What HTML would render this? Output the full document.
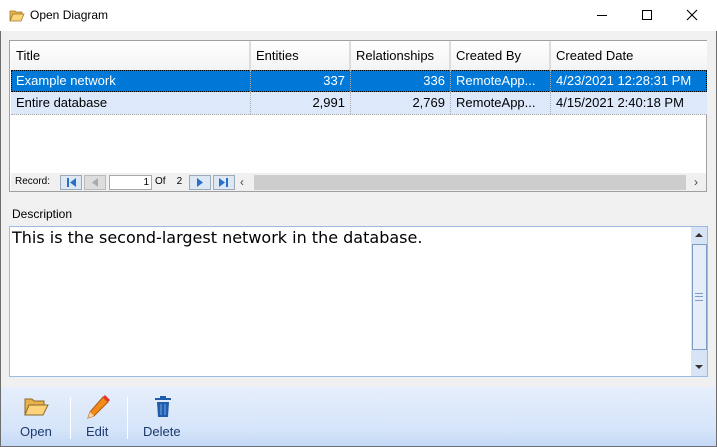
<!DOCTYPE html>
<html><head><style>
body{margin:0;width:717px;height:447px;overflow:hidden;font-family:"Liberation Sans",sans-serif;font-size:13px;background:#f0f0f0;position:relative}
.abs{position:absolute}
.win{position:absolute;left:0;top:0;width:715px;height:445px;border:1px solid #6e6e6e;border-top:1px solid #aaa;}
.title{position:absolute;left:0;top:0;width:717px;height:31px;background:#fff}
.cell{position:absolute;height:22px;line-height:22px;padding:0 5px;box-sizing:border-box;white-space:nowrap;overflow:hidden;border-right:1px dotted #aaa}
.hd{position:absolute;top:41px;height:29px;line-height:30px;padding-left:5px;box-sizing:border-box;background:linear-gradient(#fff,#f3f3f3);border-right:2px solid #ddd;font-size:13px}
.nb{position:absolute;top:175px;width:22px;height:15px;border:1px solid #9ab;background:#dde8f4;box-sizing:border-box}
</style></head><body>
<div class="win"></div>
<div class="title"></div>
<svg class="abs" style="left:9px;top:9px" width="16" height="13"><path d="M1 2h5l1 1h6v2H4L1 12z" fill="#e8b54a" stroke="#a07a2a" stroke-width=".8"/><path d="M4 5h11l-3 7H1z" fill="#fcd57a" stroke="#a07a2a" stroke-width=".8"/></svg>
<div class="abs" style="left:30px;top:8px;font-size:12px">Open Diagram</div>
<div class="abs" style="left:597px;top:15px;width:10px;height:1px;background:#000"></div>
<div class="abs" style="left:642px;top:10px;width:8px;height:8px;border:1px solid #000"></div>
<svg class="abs" style="left:686px;top:9px" width="12" height="12"><path d="M1 1L11 11M11 1L1 11" stroke="#000" stroke-width="1.1"/></svg>

<div class="abs" style="left:9px;top:40px;width:698px;height:152px;background:#fff;border:1px solid #a0a0a0;box-sizing:border-box"></div>
<div class="hd" style="left:11px;width:240px">Title</div>
<div class="hd" style="left:251px;width:100px">Entities</div>
<div class="hd" style="left:351px;width:100px">Relationships</div>
<div class="hd" style="left:451px;width:100px">Created By</div>
<div class="hd" style="left:551px;width:156px;border-right:0">Created Date</div>
<div class="abs" style="left:11px;top:70px;width:696px;height:22px;background:#0078d7;outline:1px dotted #000;outline-offset:-1px"></div>
<div class="abs" style="left:11px;top:92px;width:696px;height:22px;background:#dde8fa;border-bottom:1px dotted #aaa"></div>
<div style="color:#fff">
<div class="cell" style="left:11px;top:70px;width:240px">Example network</div>
<div class="cell" style="left:251px;top:70px;width:100px;text-align:right">337</div>
<div class="cell" style="left:351px;top:70px;width:100px;text-align:right">336</div>
<div class="cell" style="left:451px;top:70px;width:100px">RemoteApp...</div>
<div class="cell" style="left:551px;top:70px;width:156px;border:0">4/23/2021 12:28:31 PM</div>
</div>
<div class="cell" style="left:11px;top:92px;width:240px">Entire database</div>
<div class="cell" style="left:251px;top:92px;width:100px;text-align:right">2,991</div>
<div class="cell" style="left:351px;top:92px;width:100px;text-align:right">2,769</div>
<div class="cell" style="left:451px;top:92px;width:100px">RemoteApp...</div>
<div class="cell" style="left:551px;top:92px;width:156px;border:0">4/15/2021 2:40:18 PM</div>

<div class="abs" style="left:11px;top:173px;width:695px;height:18px;background:#f0f0f0"></div>
<div class="abs" style="left:15px;top:176px;font-size:10px">Record:</div>
<div class="nb" style="left:60px"><svg width="20" height="13"><rect x="6" y="2" width="2" height="9" fill="#2a6fc9"/><path d="M15 2v9l-6-4.5z" fill="#2a6fc9"/></svg></div>
<div class="nb" style="left:84px;background:#ddd;border-color:#bbb"><svg width="20" height="13"><path d="M13 2v9l-6-4.5z" fill="#aaa"/></svg></div>
<div class="abs" style="left:109px;top:175px;width:43px;height:15px;background:#fff;border:1px solid #aaa;box-sizing:border-box;font-size:10px;text-align:right;padding-right:2px;line-height:13px">1</div>
<div class="abs" style="left:155px;top:176px;font-size:10px">Of&nbsp;&nbsp;&nbsp;&nbsp;2</div>
<div class="nb" style="left:189px"><svg width="20" height="13"><path d="M7 2v9l6-4.5z" fill="#2a6fc9"/></svg></div>
<div class="nb" style="left:213px"><svg width="20" height="13"><path d="M5 2v9l6-4.5z" fill="#2a6fc9"/><rect x="12" y="2" width="2" height="9" fill="#2a6fc9"/></svg></div>
<div class="abs" style="left:240px;top:175px;font-size:12px;color:#444">‹</div>
<div class="abs" style="left:254px;top:175px;width:432px;height:15px;background:#cdcdcd"></div>
<div class="abs" style="left:694px;top:175px;font-size:12px;color:#444">›</div>

<div class="abs" style="left:12px;top:207px;font-size:12px">Description</div>
<div class="abs" style="left:9px;top:226px;width:699px;height:151px;background:#fff;border:1px solid #9bbbe3;box-sizing:border-box"></div>
<div class="abs" style="left:12px;top:228px;font-size:16px;font-family:'DejaVu Sans',sans-serif">This is the second-largest network in the database.</div>
<div class="abs" style="left:691px;top:227px;width:16px;height:149px;background:#d6e4f5"></div>
<div class="abs" style="left:692px;top:244px;width:15px;height:106px;background:#e4edf8;border:1px solid #7f9cc4;box-sizing:border-box"></div>
<div class="abs" style="left:695px;top:293px;width:8px;height:6px;border-top:1px solid #7f9cc4;border-bottom:1px solid #7f9cc4"></div>
<div class="abs" style="left:695px;top:296px;width:8px;height:1px;background:#7f9cc4"></div>
<svg class="abs" style="left:694px;top:232px" width="10" height="6"><path d="M1 5l4-4 4 4z" fill="#333"/></svg>
<svg class="abs" style="left:694px;top:364px" width="10" height="6"><path d="M1 1l4 4 4-4z" fill="#333"/></svg>

<div class="abs" style="left:1px;top:387px;width:715px;height:59px;background:linear-gradient(#e6eefb,#d6e5fa 70%,#c4d9f6)"></div>
<div class="abs" style="left:70px;top:397px;width:1px;height:42px;background:#fff"></div>
<div class="abs" style="left:127px;top:397px;width:1px;height:42px;background:#fff"></div>
<svg class="abs" style="left:23px;top:396px" width="26" height="22"><path d="M2 3h7l2 2h10v4H6L2 19z" fill="#e7b24c" stroke="#8a6a2a"/><path d="M6 9h19l-5 10H2z" fill="#fcd37a" stroke="#8a6a2a"/></svg>
<svg class="abs" style="left:84px;top:393px" width="28" height="28"><path d="M19 4l5 5L10 23l-6 2 2-6z" fill="#f28a1a" stroke="#b25a10"/><path d="M19 4l2-2 5 5-2 2z" fill="#e33"/><path d="M4 25l2-6 4 4z" fill="#f3d9a0"/></svg>
<svg class="abs" style="left:153px;top:395px" width="20" height="24"><rect x="2" y="3" width="16" height="2" fill="#1f5cab"/><rect x="7" y="1" width="6" height="2" fill="#1f5cab"/><path d="M4 7h12l-1 15H5z" fill="#1f5cab"/><path d="M8 9v11M12 9v11" stroke="#6b9bde" stroke-width="1.2"/></svg>
<div class="abs" style="left:20px;top:424px;color:#1b3a6e">Open</div>
<div class="abs" style="left:86px;top:424px;color:#1b3a6e">Edit</div>
<div class="abs" style="left:143px;top:424px;color:#1b3a6e">Delete</div>
</body></html>
